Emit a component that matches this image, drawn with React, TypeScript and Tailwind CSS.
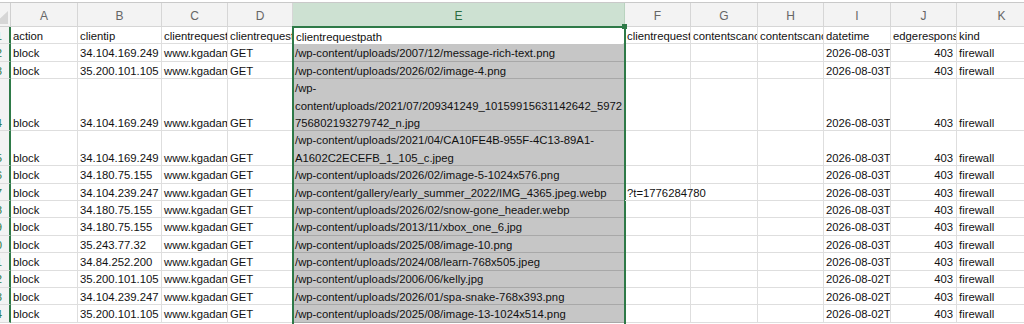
import React from "react";

const colW = [
  "w-[67px]",
  "w-[84px]",
  "w-[66px]",
  "w-[65px]",
  "w-[332px]",
  "w-[66px]",
  "w-[67px]",
  "w-[66px]",
  "w-[67px]",
  "w-[66px]",
  "w-[90px]",
];

const letters = ["A", "B", "C", "D", "E", "F", "G", "H", "I", "J", "K"];

const rowH: Record<number, string> = {
  1: "h-[17.4px]",
  2: "h-[34.8px]",
  3: "h-[52.2px]",
};

type Row = {
  n: number;
  ip: string;
  path: string[];
  query?: string;
  dt: string;
};

const rows: Row[] = [
  { n: 2, ip: "34.104.169.249", path: ["/wp-content/uploads/2007/12/message-rich-text.png"], dt: "2026-08-03T05:41:12Z" },
  { n: 3, ip: "35.200.101.105", path: ["/wp-content/uploads/2026/02/image-4.png"], dt: "2026-08-03T05:38:09Z" },
  {
    n: 4,
    ip: "34.104.169.249",
    path: ["/wp-", "content/uploads/2021/07/209341249_10159915631142642_5972", "756802193279742_n.jpg"],
    dt: "2026-08-03T05:31:44Z",
  },
  {
    n: 5,
    ip: "34.104.169.249",
    path: ["/wp-content/uploads/2021/04/CA10FE4B-955F-4C13-89A1-", "A1602C2ECEFB_1_105_c.jpeg"],
    dt: "2026-08-03T05:27:18Z",
  },
  { n: 6, ip: "34.180.75.155", path: ["/wp-content/uploads/2026/02/image-5-1024x576.png"], dt: "2026-08-03T04:59:02Z" },
  {
    n: 7,
    ip: "34.104.239.247",
    path: ["/wp-content/gallery/early_summer_2022/IMG_4365.jpeg.webp"],
    query: "?t=1776284780",
    dt: "2026-08-03T04:12:51Z",
  },
  { n: 8, ip: "34.180.75.155", path: ["/wp-content/uploads/2026/02/snow-gone_header.webp"], dt: "2026-08-03T03:47:30Z" },
  { n: 9, ip: "34.180.75.155", path: ["/wp-content/uploads/2013/11/xbox_one_6.jpg"], dt: "2026-08-03T1:03:22Z" },
  { n: 10, ip: "35.243.77.32", path: ["/wp-content/uploads/2025/08/image-10.png"], dt: "2026-08-03T1:02:10Z" },
  { n: 11, ip: "34.84.252.200", path: ["/wp-content/uploads/2024/08/learn-768x505.jpeg"], dt: "2026-08-03T1:00:58Z" },
  { n: 12, ip: "35.200.101.105", path: ["/wp-content/uploads/2006/06/kelly.jpg"], dt: "2026-08-02T23:41:05Z" },
  { n: 13, ip: "34.104.239.247", path: ["/wp-content/uploads/2026/01/spa-snake-768x393.png"], dt: "2026-08-02T22:15:40Z" },
  { n: 14, ip: "35.200.101.105", path: ["/wp-content/uploads/2025/08/image-13-1024x514.png"], dt: "2026-08-02T21:07:19Z" },
];

function Cell({
  col,
  h,
  right,
  selected,
  spill,
  children,
}: {
  col: number;
  h: string;
  right?: boolean;
  selected?: boolean;
  spill?: boolean;
  children?: React.ReactNode;
}) {
  return (
    <div
      className={`${colW[col]} ${h} flex shrink-0 flex-col justify-end whitespace-nowrap border-b border-r px-[2px] leading-[17.4px] ${
        spill ? "relative z-10 overflow-visible" : "overflow-x-clip"
      } ${right ? "items-end pr-[3px]" : "items-start"} ${
        selected ? "border-[#a8a8a8] bg-[#c6c6c6]" : "border-[#dedede]"
      }`}
    >
      <div className={`-mb-[2px] flex flex-col ${right ? "items-end" : "items-start"}`}>{children}</div>
    </div>
  );
}

function RowHead({ n, h }: { n: number; h: string }) {
  return (
    <div
      className={`${h} flex w-[31px] shrink-0 items-end justify-end border-b border-r-2 border-b-[#dcdcdc] border-r-[#2e7a48] bg-[#f3f3f3] pr-[7px] leading-[17.4px] text-[#2e7a48]`}
    >
      <span className="-mb-[2px]">{n}</span>
    </div>
  );
}

export default function App() {
  return (
    <div
      className="relative h-[324px] w-[1024px] overflow-hidden bg-white text-[11.3px] text-[#111]"
      style={{ fontFamily: '"Liberation Sans", Arial, sans-serif' }}
    >
      <div className="h-[2px] bg-white" />
      <div className="-ml-[20px] w-max">
        {/* column letters */}
        <div className="flex h-[25px] border-t border-[#c9c9c9]">
          <div className="flex w-[31px] shrink-0 items-end justify-end border-b border-r border-[#d0d0d0] bg-[#f3f3f3] pb-[2px] pr-[2px]">
            <svg width="14" height="13" viewBox="0 0 14 13">
              <polygon points="14,0 14,13 0,13" fill="#d6d6d6" />
            </svg>
          </div>
          {letters.map((l, i) => (
            <div
              key={l}
              className={`${colW[i]} flex shrink-0 items-center justify-center border-b border-r pt-[3px] text-[12px] ${
                i === 4
                  ? "border-[#b9d3bf] bg-[#cde1d2] text-[#2b6c3f]"
                  : "border-[#d6d6d6] bg-[#f3f3f3] text-[#666]"
              }`}
            >
              {l}
            </div>
          ))}
        </div>

        {/* field names */}
        <div className="flex">
          <RowHead n={1} h={rowH[1]} />
          {[
            "action",
            "clientip",
            "clientrequesthost",
            "clientrequestmethod",
            "clientrequestpath",
            "clientrequestquery",
            "contentscanobjresults",
            "contentscanobjtypes",
            "datetime",
            "edgeresponsestatus",
            "kind",
          ].map((t, i) => (
            <Cell key={t} col={i} h={rowH[1]}>
              {t}
            </Cell>
          ))}
        </div>

        {rows.map((r) => {
          const h = rowH[r.path.length];
          return (
            <div key={r.n} className="flex">
              <RowHead n={r.n} h={h} />
              <Cell col={0} h={h}>block</Cell>
              <Cell col={1} h={h}>{r.ip}</Cell>
              <Cell col={2} h={h}>www.kgadams.com</Cell>
              <Cell col={3} h={h}>GET</Cell>
              <Cell col={4} h={h} selected>
                {r.path.map((p) => (
                  <span key={p}>{p}</span>
                ))}
              </Cell>
              <Cell col={5} h={h} spill={!!r.query}>
                {r.query}
              </Cell>
              <Cell col={6} h={h} />
              <Cell col={7} h={h} />
              <Cell col={8} h={h}>{r.dt}</Cell>
              <Cell col={9} h={h} right>403</Cell>
              <Cell col={10} h={h}>firewall</Cell>
            </div>
          );
        })}
      </div>

      {/* active cell E1 and selection outline */}
      <div className="absolute left-[294px] top-[28px] flex h-[16px] w-[329px] items-end bg-white px-[2px] leading-[17.4px]">
        <span className="-mb-[2px]">clientrequestpath</span>
      </div>
      <div className="absolute bottom-0 left-[292px] top-[26px] w-[334px] border-2 border-b-0 border-[#2e7a48]" />
      <div className="absolute left-[622px] top-[24px] h-[5px] w-[5px] bg-[#2e7a48]" />
    </div>
  );
}
